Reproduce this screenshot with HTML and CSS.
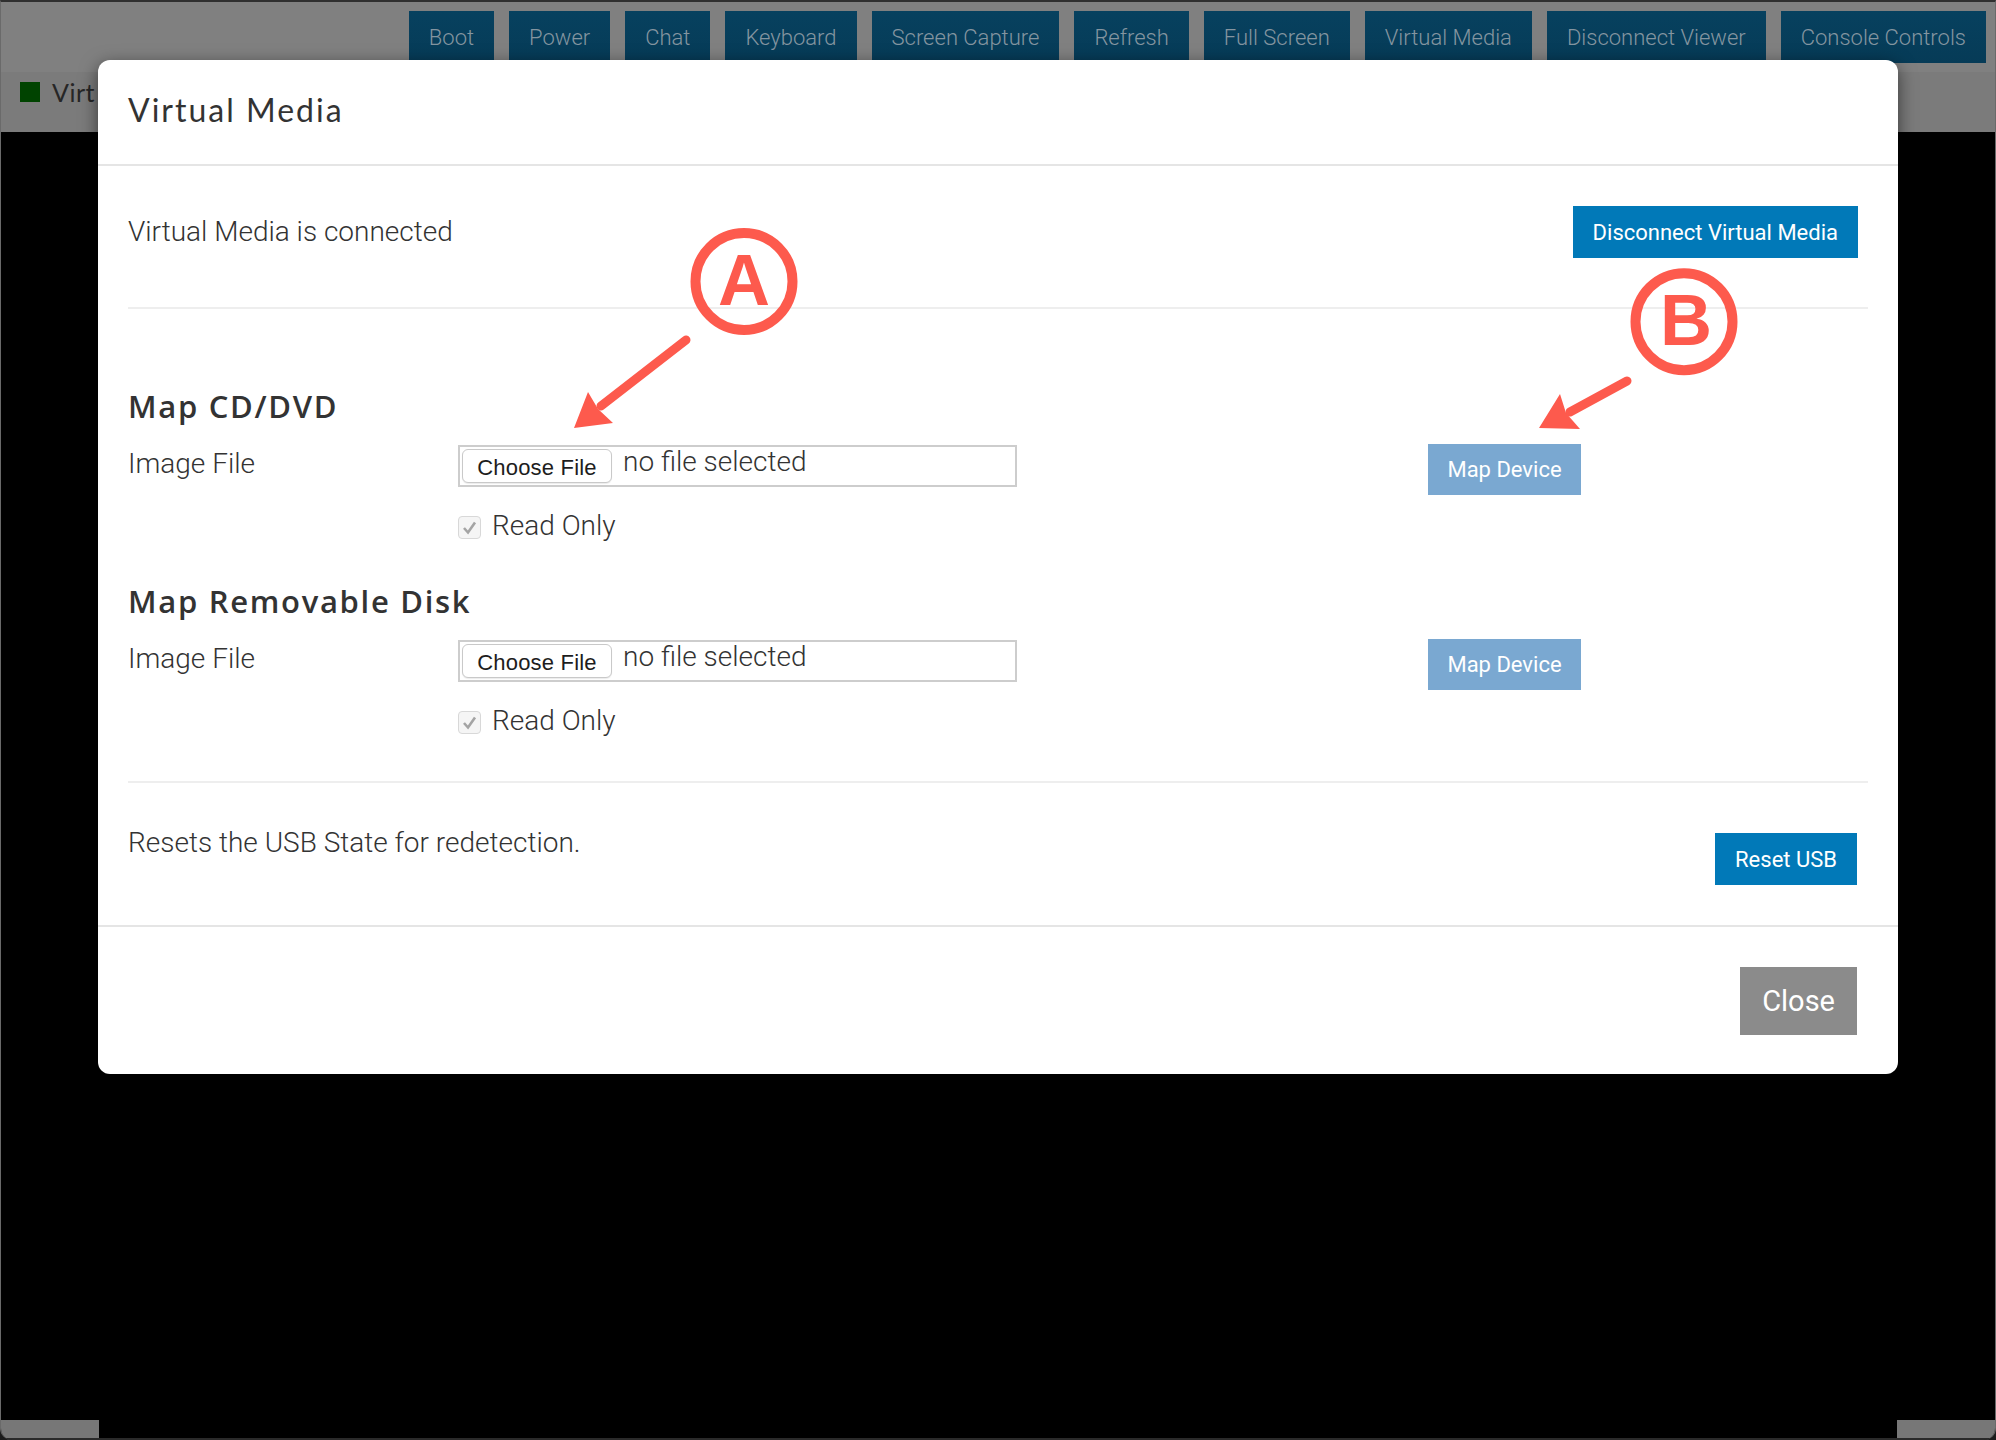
FILE: index.html
```html
<!DOCTYPE html>
<html lang="en">
<head>
<meta charset="utf-8">
<title>Virtual Console</title>
<link rel="stylesheet" href="styles.css">
</head>
<body>
<div class="window">
  <header class="toolbar">
    <button class="tb-btn">Boot</button>
    <button class="tb-btn">Power</button>
    <button class="tb-btn">Chat</button>
    <button class="tb-btn">Keyboard</button>
    <button class="tb-btn">Screen Capture</button>
    <button class="tb-btn">Refresh</button>
    <button class="tb-btn">Full Screen</button>
    <button class="tb-btn">Virtual Media</button>
    <button class="tb-btn">Disconnect Viewer</button>
    <button class="tb-btn">Console Controls</button>
  </header>
  <div class="statusbar">
    <span class="status-dot"></span>
    <span class="status-text">Virt</span>
  </div>
  <main class="viewer"></main>
  <footer class="bottom-strip">
    <span class="strip-side"></span>
    <span class="strip-mid"></span>
    <span class="strip-side"></span>
  </footer>
</div>

<div class="modal">
  <div class="modal-header">
    <h4 class="modal-title">Virtual Media</h4>
  </div>
  <div class="modal-body">
    <div class="status-row">
      <p class="text">Virtual Media is connected</p>
      <button class="btn btn-primary">Disconnect Virtual Media</button>
    </div>
    <div class="divider"></div>

    <section class="section section-first">
      <h5 class="section-title">Map CD/DVD</h5>
      <div class="file-row">
        <span class="label">Image File</span>
        <div class="file-box">
          <span class="choose-btn">Choose File</span>
          <span class="no-file">no file selected</span>
        </div>
        <button class="btn btn-map">Map Device</button>
      </div>
      <div class="check-row">
        <span class="checkbox"><svg width="19" height="19" viewBox="0 0 19 19"><path d="M4 10 L8 14.5 L15 4.5" fill="none" stroke="#a4a4a4" stroke-width="2.6"/></svg></span>
        <span class="check-label">Read Only</span>
      </div>
    </section>

    <section class="section section-next">
      <h5 class="section-title">Map Removable Disk</h5>
      <div class="file-row">
        <span class="label">Image File</span>
        <div class="file-box">
          <span class="choose-btn">Choose File</span>
          <span class="no-file">no file selected</span>
        </div>
        <button class="btn btn-map">Map Device</button>
      </div>
      <div class="check-row">
        <span class="checkbox"><svg width="19" height="19" viewBox="0 0 19 19"><path d="M4 10 L8 14.5 L15 4.5" fill="none" stroke="#a4a4a4" stroke-width="2.6"/></svg></span>
        <span class="check-label">Read Only</span>
      </div>
    </section>

    <div class="divider divider-lower"></div>
    <div class="reset-row">
      <p class="text">Resets the USB State for redetection.</p>
      <button class="btn btn-primary btn-reset">Reset USB</button>
    </div>
  </div>
  <div class="modal-footer">
    <button class="btn btn-close">Close</button>
  </div>
</div>

<svg class="annotations" width="1996" height="1440" viewBox="0 0 1996 1440">
  <g fill="none" stroke="#fd5a4d" stroke-width="10">
    <circle cx="744" cy="281.5" r="48.5"/>
    <circle cx="1684" cy="321.7" r="48.5"/>
  </g>
  <text x="744" y="305" text-anchor="middle" class="anno-letter">A</text>
  <text x="1686" y="345" text-anchor="middle" class="anno-letter">B</text>
  <g stroke="#fd5a4d" stroke-width="9" stroke-linecap="round" fill="none">
    <line x1="686" y1="340" x2="601" y2="406"/>
    <line x1="1627" y1="381" x2="1570" y2="412"/>
  </g>
  <g fill="#fd5a4d">
    <polygon points="574,428 588,392 598,409 613,423"/>
    <polygon points="1539,428 1560,394 1566,413 1580,429"/>
  </g>
</svg>
</body>
</html>
```

FILE: styles.css
```css
* {
  box-sizing: border-box;
  margin: 0;
  padding: 0;
}

html, body {
  width: 1996px;
  height: 1440px;
  overflow: hidden;
  background: #1c1c1c;
}

body {
  position: relative;
  font-family: Roboto, "Liberation Sans", sans-serif;
}

.window {
  width: 1996px;
  height: 1440px;
  display: flex;
  flex-direction: column;
  border-top: 2px solid #2f2f2f;
  border-left: 1px solid #6a6a6a;
  border-right: 1px solid #6a6a6a;
  border-radius: 0 0 12px 12px;
  overflow: hidden;
}

.toolbar {
  height: 70px;
  background: #808080;
  display: flex;
  justify-content: flex-end;
  align-items: flex-start;
  gap: 15px;
  padding: 9px 9px 0 0;
}

.tb-btn {
  height: 52px;
  padding: 0 20px;
  border: none;
  background: linear-gradient(#07415f, #063b57);
  color: #8495a0;
  font-family: Roboto, "Liberation Sans", sans-serif;
  font-size: 22px;
  font-weight: 300;
}

.statusbar {
  height: 60px;
  background: #7b7b7b;
  display: flex;
  align-items: flex-start;
  gap: 12px;
  padding: 10px 0 0 19px;
}

.status-dot {
  width: 20px;
  height: 20px;
  background: #004300;
}

.status-text {
  margin-top: -4px;
  font-family: Lato, "Open Sans", sans-serif;
  font-size: 25px;
  line-height: 28px;
  color: #262626;
  letter-spacing: 0.5px;
}

.viewer {
  flex: 1;
  background: #000;
}

.bottom-strip {
  height: 20px;
  display: flex;
  border-bottom: 2px solid #2a2a2a;
}

.strip-side {
  width: 98px;
  background: #777;
}

.strip-mid {
  flex: 1;
  background: #000;
}

/* Modal */
.modal {
  position: absolute;
  left: 98px;
  top: 60px;
  width: 1800px;
  background: #fff;
  border-radius: 12px;
  box-shadow: 0 5px 18px rgba(0, 0, 0, 0.55);
}

.modal-header {
  padding: 30px 30px 34px;
  border-bottom: 2px solid #e5e5e5;
}

.modal-title {
  font-family: Lato, "Open Sans", sans-serif;
  font-weight: 400;
  font-size: 32px;
  line-height: 40px;
  letter-spacing: 2px;
  color: #333;
}

.modal-body {
  padding: 40px 30px 40px;
}

.status-row {
  display: flex;
  align-items: center;
  justify-content: space-between;
  padding-right: 10px;
}

.text {
  font-family: Roboto, "Liberation Sans", sans-serif;
  font-weight: 300;
  font-size: 28px;
  line-height: 40px;
  color: #333;
}

.btn {
  height: 52px;
  padding: 0 20px;
  border: none;
  color: #fff;
  font-family: Roboto, "Liberation Sans", sans-serif;
  font-weight: 400;
  font-size: 22px;
}

.btn-primary {
  background: #0179b8;
}

.divider {
  height: 2px;
  background: #eeeeee;
  margin-top: 49px;
}

.divider-lower {
  margin-top: 44px;
}

.section-first {
  margin-top: 79px;
}

.section-next {
  margin-top: 41px;
}

.section-title {
  font-family: "Open Sans", Lato, sans-serif;
  font-weight: 600;
  font-size: 31px;
  line-height: 36px;
  letter-spacing: 1.7px;
  color: #333;
}

.file-row {
  display: flex;
  align-items: flex-start;
  margin-top: 20px;
}

.label {
  width: 330px;
  font-weight: 300;
  font-size: 28px;
  line-height: 40px;
  color: #333;
}

.file-box {
  width: 559px;
  height: 42px;
  margin-top: 1px;
  border: 2px solid #cdcdcd;
  display: flex;
  align-items: flex-start;
  gap: 11px;
  padding: 0 2px;
}

.choose-btn {
  margin-top: 2px;
  width: 150px;
  height: 34px;
  border: 1px solid #c9c9c9;
  border-radius: 6px;
  background: #fff;
  box-shadow: 0 1px 1px rgba(0, 0, 0, 0.08);
  display: flex;
  align-items: center;
  justify-content: center;
  padding-top: 3px;
  font-family: "Liberation Sans", Arial, sans-serif;
  font-size: 22px;
  letter-spacing: 0.2px;
  color: #1d1d1d;
}

.no-file {
  font-weight: 300;
  font-size: 28px;
  line-height: 30px;
  color: #333;
}

.btn-map {
  margin-left: 411px;
  width: 153px;
  height: 51px;
  padding: 0;
  background: #7aa8d1;
}

.check-row {
  display: flex;
  align-items: center;
  gap: 11px;
  height: 30px;
  margin-top: 17px;
  padding-left: 330px;
}

.checkbox {
  width: 23px;
  height: 23px;
  border: 1px solid #d8d8d8;
  border-radius: 4px;
  background: #f5f5f5;
  display: flex;
  align-items: center;
  justify-content: center;
}

.check-label {
  margin-top: -2px;
  font-weight: 300;
  font-size: 28px;
  line-height: 30px;
  color: #333;
}

.reset-row {
  display: flex;
  align-items: flex-start;
  justify-content: space-between;
  margin-top: 40px;
  padding-right: 11px;
}

.btn-reset {
  margin-top: 10px;
}

.modal-footer {
  border-top: 2px solid #e5e5e5;
  padding: 40px 41px 39px;
  display: flex;
  justify-content: flex-end;
}

.btn-close {
  height: 68px;
  padding: 0 22px;
  background: #8b8b8b;
  font-size: 29px;
}

/* Annotation overlay */
.annotations {
  position: absolute;
  left: 0;
  top: 0;
  pointer-events: none;
}

.anno-letter {
  font-family: "Liberation Sans", Arial, sans-serif;
  font-weight: 700;
  font-size: 72px;
  fill: #fd5a4d;
}
```
